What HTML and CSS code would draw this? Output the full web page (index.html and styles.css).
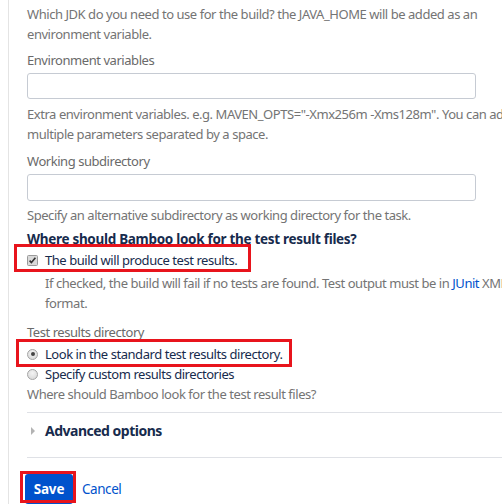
FILE: index.html
```
<!DOCTYPE html>
<html>
<head>
<meta charset="utf-8">
<link rel="stylesheet" href="styles.css">
</head>
<body>
<div class="panel">
  <p class="desc first">Which JDK do you need to use for the build? the JAVA_HOME will be added as an<br>environment variable.</p>

  <div class="field">
    <label class="lbl">Environment variables</label>
    <div class="input"></div>
    <p class="desc">Extra environment variables. e.g. MAVEN_OPTS="-Xmx256m -Xms128m". You can add<br>multiple parameters separated by a space.</p>
  </div>

  <div class="field f2">
    <label class="lbl">Working subdirectory</label>
    <div class="input"></div>
    <p class="desc">Specify an alternative subdirectory as working directory for the task.</p>
  </div>

  <h3 class="heading">Where should Bamboo look for the test result files?</h3>

  <div class="check-row">
    <span class="hl hl1"></span>
    <svg class="cb" width="11" height="11" viewBox="0 0 11 11"><rect x="0.5" y="0.5" width="10" height="10" rx="1" fill="#d9d9d9" stroke="#9a9a9a"/><path d="M2.6 5.6 L4.4 7.6 L8.4 2.8" fill="none" stroke="#333" stroke-width="1.6"/></svg>
    <span class="opt">The build will produce test results.</span>
  </div>
  <p class="desc indent">If checked, the build will fail if no tests are found. Test output must be in <a class="link">JUnit</a> XML<br>format.</p>

  <label class="lbl dir">Test results directory</label>
  <div class="radio-row r1">
    <span class="hl hl2"></span>
    <span class="radio on"></span>
    <span class="opt">Look in the standard test results directory.</span>
  </div>
  <div class="radio-row">
    <span class="radio"></span>
    <span class="opt">Specify custom results directories</span>
  </div>
  <p class="desc">Where should Bamboo look for the test result files?</p>

  <div class="advanced">
    <span class="tri"></span>
    <span class="adv-text">Advanced options</span>
  </div>

  <div class="buttons">
    <span class="hl hl3"></span>
    <span class="btn">Save</span>
    <a class="cancel">Cancel</a>
  </div>
</div>
</body>
</html>
```
FILE: styles.css
```
html, body {
  margin: 0;
  padding: 0;
  background: #fff;
  overflow: hidden;
  height: 504px;
}
body {
  font-family: "Noto Sans", "Open Sans", sans-serif;
  font-size: 13px;
  letter-spacing: -0.45px;
}
.panel {
  margin-left: 8px;
  border-left: 1px solid #e4e4e4;
  padding: 4px 0 0 18px;
  height: 600px;
  width: 700px;
}
p { margin: 0; }
.desc {
  color: #747474;
  line-height: 20px;
  white-space: nowrap;
}
.lbl {
  display: block;
  color: #6a6a6a;
  line-height: 20px;
  white-space: nowrap;
}
.field { margin-top: 6px; }
.field.f2 { margin-top: 7px; }
.input {
  box-sizing: border-box;
  width: 449px;
  height: 26px;
  border: 1px solid #c6cbd3;
  border-radius: 3px;
  background: #fff;
  margin: 3px 0 5px;
}
.f2 .input { height: 27px; margin-bottom: 4px; }
.heading {
  margin: 4px 0 0;
  font-size: 13.5px;
  font-weight: 700;
  color: #172b4d;
  line-height: 20px;
  letter-spacing: -0.3px;
}
.check-row, .radio-row {
  position: relative;
  display: flex;
  align-items: center;
  height: 20px;
  white-space: nowrap;
}
.check-row { margin-top: 1px; }
.cb { flex: none; }
.opt {
  color: #172b4d;
  margin-left: 7px;
  line-height: 20px;
}
.indent { padding-left: 18px; margin-top: 3px; }
.link { color: #0052cc; }
.lbl.dir { margin-top: 9px; }
.radio-row.r1 { margin-top: 2px; }
.radio {
  box-sizing: border-box;
  flex: none;
  width: 11px;
  height: 11px;
  border-radius: 50%;
  border: 1px solid #a4a4a4;
  background: radial-gradient(circle at 50% 35%, #f4f4f4, #d4d4d4);
  position: relative;
}
.radio.on::after {
  content: "";
  position: absolute;
  left: 2.5px;
  top: 2.5px;
  width: 4px;
  height: 4px;
  border-radius: 50%;
  background: #444;
}
.advanced {
  box-sizing: border-box;
  margin-top: 8px;
  border-top: 1px solid #dfe1e6;
  border-bottom: 1px solid #dfe1e6;
  height: 46px;
  padding-top: 8px;
  display: flex;
  align-items: flex-start;
}
.tri {
  width: 0;
  height: 0;
  border-top: 4px solid transparent;
  border-bottom: 4px solid transparent;
  border-left: 4px solid #b3b3b3;
  margin: 6px 0 0 4px;
}
.adv-text {
  margin-left: 10px;
  font-size: 14px;
  line-height: 20px;
  font-weight: 700;
  color: #172b4d;
  letter-spacing: -0.5px;
}
.buttons {
  position: relative;
  display: flex;
  align-items: center;
  margin-top: 16px;
  margin-left: -2px;
}
.btn {
  box-sizing: border-box;
  width: 48px;
  height: 30px;
  background: #0052cc;
  color: #fff;
  font-weight: 700;
  font-size: 13.5px;
  border-radius: 3px;
  display: flex;
  align-items: center;
  justify-content: center;
  letter-spacing: -0.2px;
}
.cancel {
  color: #0052cc;
  margin-left: 9px;
  font-size: 13.5px;
}
.hl {
  position: absolute;
  box-sizing: border-box;
  border: 3px solid #e8141c;
  z-index: 2;
}
.hl1 { left: -13px; top: -6px; width: 237px; height: 28px; }
.hl2 { left: -11px; top: -5px; width: 276px; height: 28px; }
.hl3 { left: -5px; top: -3px; width: 56px; height: 32px; }
```
